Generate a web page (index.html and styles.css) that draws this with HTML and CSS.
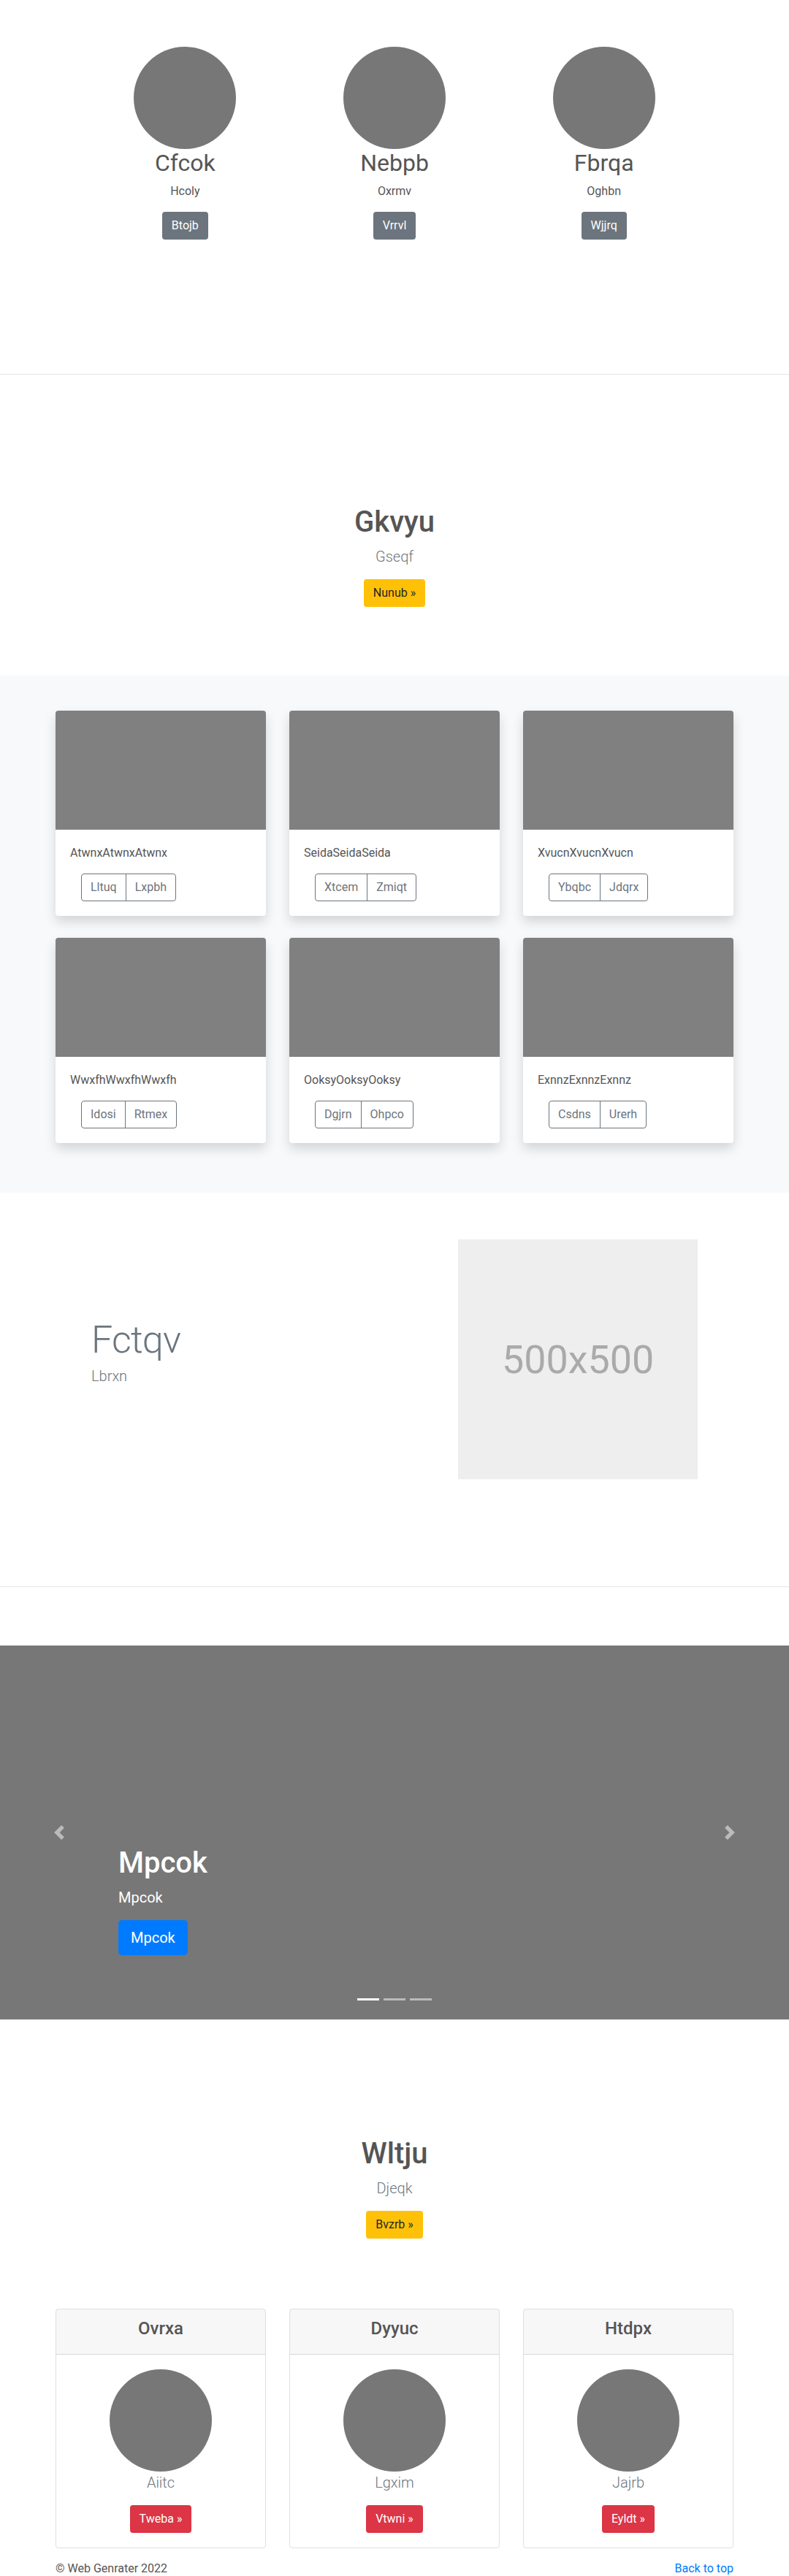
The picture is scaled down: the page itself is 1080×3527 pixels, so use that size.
FILE: index.html
```html
<!DOCTYPE html>
<html lang="en">
<head>
    <meta charset="UTF-8">
    <meta name="viewport" content="width=device-width, initial-scale=1.0">
    <title>Web Genrater</title>
    <link rel="stylesheet" href="styles.css">
</head>
<body>

    <section class="team">
        <div class="team-row">
            <div class="member">
                <div class="avatar"></div>
                <h2>Cfcok</h2>
                <p>Hcoly</p>
                <p class="action"><a class="btn btn-secondary" href="#">Btojb</a></p>
            </div>
            <div class="member">
                <div class="avatar"></div>
                <h2>Nebpb</h2>
                <p>Oxrmv</p>
                <p class="action"><a class="btn btn-secondary" href="#">Vrrvl</a></p>
            </div>
            <div class="member">
                <div class="avatar"></div>
                <h2>Fbrqa</h2>
                <p>Oghbn</p>
                <p class="action"><a class="btn btn-secondary" href="#">Wjjrq</a></p>
            </div>
        </div>
    </section>

    <section class="hero">
        <h1>Gkvyu</h1>
        <p class="lead">Gseqf</p>
        <p class="action"><a class="btn btn-warning" href="#">Nunub &raquo;</a></p>
    </section>

    <section class="album">
        <div class="album-grid">
            <div class="card">
                <div class="thumb"></div>
                <div class="card-body">
                    <p>AtwnxAtwnxAtwnx</p>
                    <div class="btn-group">
                        <a class="btn btn-outline" href="#">Lltuq</a>
                        <a class="btn btn-outline" href="#">Lxpbh</a>
                    </div>
                </div>
            </div>
            <div class="card">
                <div class="thumb"></div>
                <div class="card-body">
                    <p>SeidaSeidaSeida</p>
                    <div class="btn-group">
                        <a class="btn btn-outline" href="#">Xtcem</a>
                        <a class="btn btn-outline" href="#">Zmiqt</a>
                    </div>
                </div>
            </div>
            <div class="card">
                <div class="thumb"></div>
                <div class="card-body">
                    <p>XvucnXvucnXvucn</p>
                    <div class="btn-group">
                        <a class="btn btn-outline" href="#">Ybqbc</a>
                        <a class="btn btn-outline" href="#">Jdqrx</a>
                    </div>
                </div>
            </div>
            <div class="card">
                <div class="thumb"></div>
                <div class="card-body">
                    <p>WwxfhWwxfhWwxfh</p>
                    <div class="btn-group">
                        <a class="btn btn-outline" href="#">Idosi</a>
                        <a class="btn btn-outline" href="#">Rtmex</a>
                    </div>
                </div>
            </div>
            <div class="card">
                <div class="thumb"></div>
                <div class="card-body">
                    <p>OoksyOoksyOoksy</p>
                    <div class="btn-group">
                        <a class="btn btn-outline" href="#">Dgjrn</a>
                        <a class="btn btn-outline" href="#">Ohpco</a>
                    </div>
                </div>
            </div>
            <div class="card">
                <div class="thumb"></div>
                <div class="card-body">
                    <p>ExnnzExnnzExnnz</p>
                    <div class="btn-group">
                        <a class="btn btn-outline" href="#">Csdns</a>
                        <a class="btn btn-outline" href="#">Urerh</a>
                    </div>
                </div>
            </div>
        </div>
    </section>

    <section class="featurette">
        <div class="featurette-row">
            <div class="featurette-text">
                <h2>Fctqv</h2>
                <p class="lead">Lbrxn</p>
            </div>
            <div class="featurette-image">
                <svg viewBox="0 0 500 500" role="img" aria-label="500x500">
                    <rect width="100%" height="100%" fill="#eee"/>
                    <text x="50%" y="50%" fill="#aaa" dy=".35em" text-anchor="middle">500x500</text>
                </svg>
            </div>
        </div>
    </section>

    <hr class="divider">

    <div class="carousel">
        <div class="carousel-caption">
            <h1>Mpcok</h1>
            <p class="caption-text">Mpcok</p>
            <p class="action"><a class="btn btn-lg btn-primary" href="#">Mpcok</a></p>
        </div>
        <a class="carousel-control prev" href="#">
            <svg viewBox="0 0 8 8" width="20" height="20"><path fill="#fff" d="M5.25 0l-4 4 4 4 1.5-1.5L4.25 4l2.5-2.5L5.25 0z"/></svg>
        </a>
        <a class="carousel-control next" href="#">
            <svg viewBox="0 0 8 8" width="20" height="20"><path fill="#fff" d="M2.75 0l-1.5 1.5L3.75 4l-2.5 2.5L2.75 8l4-4-4-4z"/></svg>
        </a>
        <ol class="indicators">
            <li class="active"></li>
            <li></li>
            <li></li>
        </ol>
    </div>

    <section class="pricing-head">
        <h1>Wltju</h1>
        <p class="lead">Djeqk</p>
        <p class="action"><a class="btn btn-warning" href="#">Bvzrb &raquo;</a></p>
    </section>

    <section class="pricing">
        <div class="pricing-card">
            <div class="pricing-header"><h4>Ovrxa</h4></div>
            <div class="pricing-body">
                <div class="avatar"></div>
                <p class="lead">Aiitc</p>
                <a class="btn btn-danger" href="#">Tweba &raquo;</a>
            </div>
        </div>
        <div class="pricing-card">
            <div class="pricing-header"><h4>Dyyuc</h4></div>
            <div class="pricing-body">
                <div class="avatar"></div>
                <p class="lead">Lgxim</p>
                <a class="btn btn-danger" href="#">Vtwni &raquo;</a>
            </div>
        </div>
        <div class="pricing-card">
            <div class="pricing-header"><h4>Htdpx</h4></div>
            <div class="pricing-body">
                <div class="avatar"></div>
                <p class="lead">Jajrb</p>
                <a class="btn btn-danger" href="#">Eyldt &raquo;</a>
            </div>
        </div>
    </section>

    <footer>
        <p>&copy; Web Genrater 2022</p>
        <p><a href="#">Back to top</a></p>
    </footer>

</body>
</html>
```

FILE: styles.css
```css
body {
    margin: 0;
    font-family: "Segoe UI", Roboto, "Helvetica Neue", Arial, "Noto Sans", sans-serif;
    font-size: 16px;
    line-height: 1.5;
    color: #555;
    background-color: #fff;
}

h1, h2, h4 {
    margin: 0 0 8px 0;
    line-height: 1.2;
    font-weight: 500;
}

p {
    margin: 0 0 16px 0;
}

.action {
    margin: 0;
}

.lead {
    font-size: 20px;
    font-weight: 300;
    color: #6c757d;
}

/* buttons */
.btn {
    display: inline-block;
    font-size: 16px;
    line-height: 1.5;
    padding: 6px 12px;
    border: 1px solid transparent;
    border-radius: 4px;
    text-decoration: none;
    text-align: center;
}

.btn-lg {
    font-size: 20px;
    padding: 8px 16px;
    border-radius: 5px;
}

.btn-secondary {
    background-color: #6c757d;
    color: #fff;
}

.btn-warning {
    background-color: #ffc107;
    color: #212529;
}

.btn-primary {
    background-color: #007bff;
    color: #fff;
}

.btn-danger {
    background-color: #dc3545;
    color: #fff;
}

.btn-outline {
    color: #6c757d;
    border-color: #6c757d;
}

.avatar {
    width: 140px;
    height: 140px;
    border-radius: 50%;
    background-color: #777;
    margin: 0 auto;
}

/* team */
.team {
    padding: 64px 0 184px;
}

.team-row {
    width: 860px;
    margin: 0 auto;
    display: grid;
    grid-template-columns: repeat(3, 1fr);
    text-align: center;
}

.member h2 {
    font-size: 32px;
    font-weight: 400;
}

/* hero */
.hero {
    border-top: 1px solid rgba(0, 0, 0, .1);
    padding: 178px 0 94px;
    text-align: center;
}

.hero h1,
.pricing-head h1 {
    font-size: 40px;
}

/* album */
.album {
    background-color: #f8f9fa;
    padding: 48px 0 68px;
}

.album-grid {
    width: 928px;
    margin: 0 auto;
    display: grid;
    grid-template-columns: repeat(3, 288px);
    gap: 30px 32px;
}

.card {
    background-color: #fff;
    border-radius: 4px;
    overflow: hidden;
    box-shadow: 0 8px 16px rgba(0, 0, 0, .15);
}

.thumb {
    height: 163px;
    background-color: #808080;
}

.card-body {
    padding: 20px;
}

.btn-group {
    display: inline-flex;
    margin-left: 15px;
}

.btn-group .btn:first-child {
    border-top-right-radius: 0;
    border-bottom-right-radius: 0;
}

.btn-group .btn + .btn {
    margin-left: -1px;
    border-top-left-radius: 0;
    border-bottom-left-radius: 0;
}

/* featurette */
.featurette {
    padding: 64px 0 146px;
}

.featurette-row {
    width: 860px;
    margin: 0 auto;
    display: grid;
    grid-template-columns: 7fr 5fr;
    align-items: center;
}

.featurette-text,
.featurette-image {
    padding: 0 15px;
}

.featurette-text h2 {
    font-size: 52px;
    font-weight: 300;
    line-height: 1;
    letter-spacing: -0.8px;
    color: #6c757d;
}

.featurette-image svg {
    display: block;
    width: 100%;
    height: auto;
}

.featurette-image text {
    font-size: 82px;
    font-family: "Segoe UI", Roboto, Arial, sans-serif;
}

.divider {
    margin: 0;
    border: 0;
    border-top: 1px solid rgba(0, 0, 0, .1);
}

/* carousel */
.carousel {
    position: relative;
    height: 512px;
    margin-top: 80px;
    background-color: #777;
}

.carousel-caption {
    position: absolute;
    left: 15%;
    right: 15%;
    bottom: 52px;
    padding: 20px 0;
    color: #fff;
}

.carousel-caption h1 {
    font-size: 40px;
}

.carousel-caption .action {
    margin-bottom: 16px;
}

.caption-text {
    font-size: 20px;
}

.carousel-control {
    position: absolute;
    top: 0;
    bottom: 0;
    width: 15%;
    display: flex;
    align-items: center;
    justify-content: center;
    opacity: .5;
}

.carousel-control.prev {
    left: 0;
}

.carousel-control.next {
    right: 0;
}

.indicators {
    position: absolute;
    left: 0;
    right: 0;
    bottom: 0;
    margin: 0 0 16px;
    padding: 0;
    list-style: none;
    display: flex;
    justify-content: center;
}

.indicators li {
    width: 30px;
    height: 3px;
    margin: 0 3px;
    border-top: 10px solid transparent;
    border-bottom: 10px solid transparent;
    background-color: #fff;
    background-clip: padding-box;
    opacity: .5;
}

.indicators li.active {
    opacity: 1;
}

/* pricing */
.pricing-head {
    padding: 160px 0 96px;
    text-align: center;
}

.pricing {
    width: 928px;
    margin: 0 auto;
    display: grid;
    grid-template-columns: repeat(3, 288px);
    gap: 32px;
}

.pricing-card {
    border: 1px solid rgba(0, 0, 0, .125);
    border-radius: 4px;
    text-align: center;
}

.pricing-header {
    background-color: rgba(0, 0, 0, .03);
    border-bottom: 1px solid rgba(0, 0, 0, .125);
    padding: 12px 20px;
}

.pricing-header h4 {
    font-size: 24px;
}

.pricing-body {
    padding: 20px;
}

/* footer */
footer {
    width: 928px;
    margin: 0 auto;
    padding: 16px 0;
    display: flex;
    justify-content: space-between;
}

footer p {
    margin: 0;
}

footer a {
    color: #007bff;
    text-decoration: none;
}
```
